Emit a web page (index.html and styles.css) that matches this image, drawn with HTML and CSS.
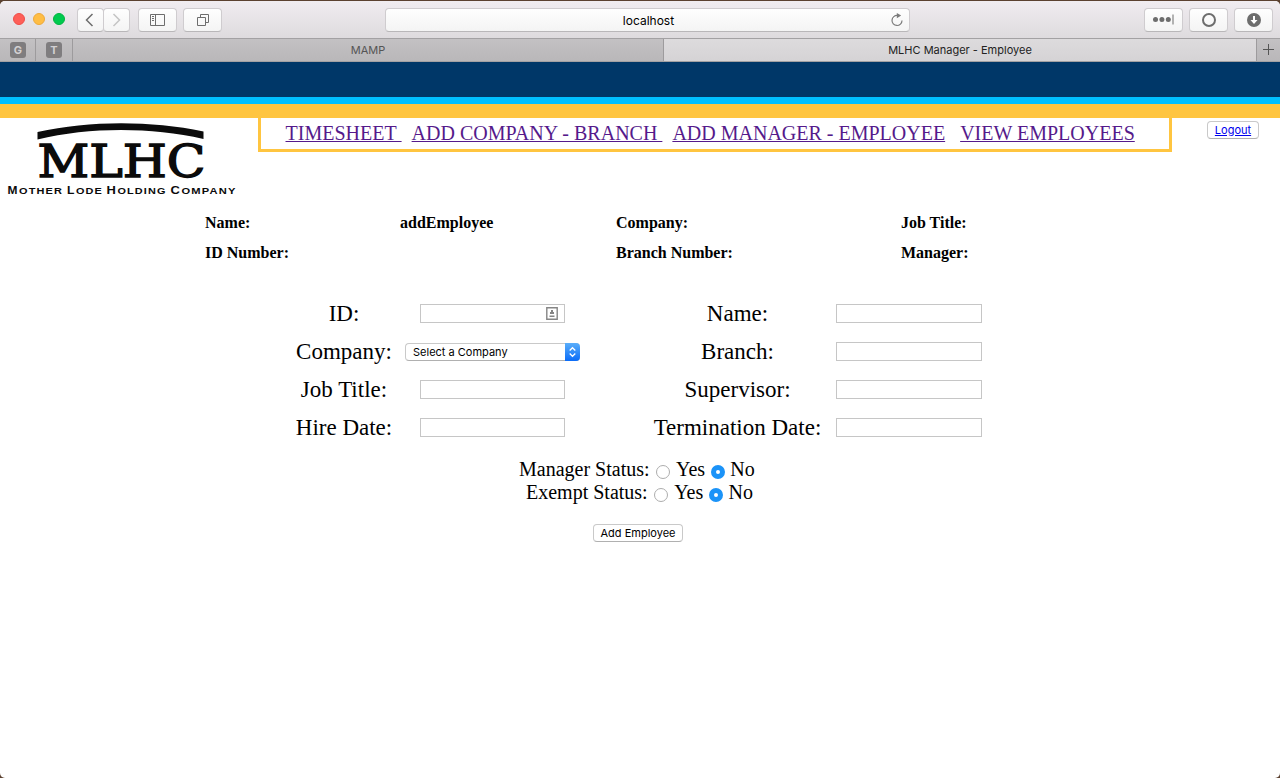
FILE: index.html
```html
<!DOCTYPE html>
<html lang="en">
<head>
<meta charset="utf-8">
<title>MLHC Manager - Employee</title>
<link rel="stylesheet" href="styles.css">
</head>
<body>
<div class="window">
  <header class="toolbar">
    <div class="lights"><i class="light red"></i><i class="light amber"></i><i class="light green"></i></div>
    <div class="history">
      <span class="tool back"><svg width="26" height="22" viewBox="0 0 26 22"><path d="M14.500 5L8.500 11l6 6" fill="none" stroke="#6d6d6d" stroke-width="1.500"/></svg></span>
      <span class="tool forward"><svg width="26" height="22" viewBox="0 0 26 22"><path d="M9.500 5l6 6-6 6" fill="none" stroke="#c4c4c4" stroke-width="1.500"/></svg></span>
    </div>
    <span class="tool sidebar"><svg width="37" height="22" viewBox="0 0 37 22"><path d="M11.500 5.500h14v11h-14zM16.500 5.500v11M13 7.500h2M13 9.500h2M13 11.500h2" fill="none" stroke="#6d6d6d"/></svg></span>
    <span class="tool overview"><svg width="37" height="22" viewBox="0 0 37 22"><path d="M13.500 8.500h8v8h-8zM16.500 8.500v-3h8v8h-3" fill="none" stroke="#6d6d6d"/></svg></span>
    <div class="address"><span class="host">localhost</span>
      <svg class="reload" width="14" height="16" viewBox="0 0 14 16"><path d="M7.500 3.500A5 5 0 1 0 12 8.500" fill="none" stroke="#7a7a7a" stroke-width="1.200"/><path d="M6.800 1l4.400 2.600-4.400 2.600z" fill="#7a7a7a"/></svg>
    </div>
    <span class="tool dots"><svg width="37" height="22" viewBox="0 0 37 22"><g fill="#6d6d6d"><circle cx="10.500" cy="10.500" r="2.500"/><circle cx="16.900" cy="10.500" r="2.500"/><circle cx="23.300" cy="10.500" r="2.500"/><path d="M27.500 5.500h1v10h-1z"/></g></svg></span>
    <span class="tool ring"><svg width="37" height="22" viewBox="0 0 37 22"><circle cx="19" cy="11" r="6" fill="none" stroke="#6d6d6d" stroke-width="2"/></svg></span>
    <span class="tool download"><svg width="37" height="22" viewBox="0 0 37 22"><circle cx="19" cy="11" r="7" fill="#6d6d6d"/><path d="M18 7h2v4h2.500L19 15l-3.500-4H18z" fill="#fff"/></svg></span>
  </header>
  <div class="tabs">
    <span class="pin"><b>G</b></span>
    <span class="pin"><b>T</b></span>
    <span class="tab">MAMP</span>
    <span class="tab active">MLHC Manager - Employee</span>
    <span class="new-tab"><svg width="24" height="23" viewBox="0 0 24 23"><path d="M6 10.500h11M11.500 5v11" fill="none" stroke="#555"/></svg></span>
  </div>
  <main class="page">
    <div class="banner"></div>
    <div class="top">
      <svg class="logo" width="244" height="86" viewBox="0 0 244 86">
        <path d="M37.500 14C90 2.500 150 2.500 203.500 13.500V21C150 9 90 9 37.500 21.500z" fill="#0b0b0b"/>
        <text class="logo-name" x="37.500" y="58.500" textLength="168" lengthAdjust="spacingAndGlyphs">MLHC</text>
        <g class="logo-line">
          <text class="cap" x="7.500" y="76" textLength="11" lengthAdjust="spacingAndGlyphs">M</text>
          <text x="19" y="76" textLength="44" lengthAdjust="spacingAndGlyphs">OTHER</text>
          <text class="cap" x="67" y="76" textLength="8.500" lengthAdjust="spacingAndGlyphs">L</text>
          <text x="76" y="76" textLength="27" lengthAdjust="spacingAndGlyphs">ODE</text>
          <text class="cap" x="106.500" y="76" textLength="10.500" lengthAdjust="spacingAndGlyphs">H</text>
          <text x="117.500" y="76" textLength="49" lengthAdjust="spacingAndGlyphs">OLDING</text>
          <text class="cap" x="170.500" y="76" textLength="10.500" lengthAdjust="spacingAndGlyphs">C</text>
          <text x="181.500" y="76" textLength="55" lengthAdjust="spacingAndGlyphs">OMPANY</text>
        </g>
      </svg>
      <nav class="nav">
        <a href="#">TIMESHEET&nbsp;</a>
        <a href="#">ADD COMPANY - BRANCH&nbsp;</a>
        <a href="#">ADD MANAGER - EMPLOYEE</a>
        <a href="#" class="last">VIEW EMPLOYEES</a>
      </nav>
      <button class="button logout"><a href="#">Logout</a></button>
    </div>
    <div class="details">
      <b>Name:</b><b>addEmployee</b><b>Company:</b><b>Job Title:</b>
      <b>ID Number:</b><b></b><b>Branch Number:</b><b>Manager:</b>
    </div>
    <form class="form">
      <div class="fields left">
        <label>ID:</label><span class="input"><svg width="12" height="13" viewBox="0 0 12 13"><path d="M.8.800h10.400v11.400H.8z" fill="#fff" stroke="#858585" stroke-width="1.400"/><path d="M5 3h2v2h1v2H4V5h1zM3.500 8.500h5V10h-5z" fill="#858585"/></svg></span>
        <label>Company:</label><span class="select"><span>Select a Company</span><svg width="15" height="18" viewBox="0 0 15 18"><path d="M4.700 7.500l2.800-2.800 2.800 2.800M4.700 10.500l2.800 2.800 2.800-2.800" fill="none" stroke="#fff" stroke-width="1.300"/></svg></span>
        <label>Job Title:</label><span class="input"></span>
        <label>Hire Date:</label><span class="input"></span>
      </div>
      <div class="fields right">
        <label>Name:</label><span class="input"></span>
        <label>Branch:</label><span class="input"></span>
        <label>Supervisor:</label><span class="input"></span>
        <label>Termination Date:</label><span class="input"></span>
      </div>
    </form>
    <div class="status manager"><span>Manager Status:</span><i class="radio"></i><span>Yes</span><i class="radio on"></i><span>No</span></div>
    <div class="status exempt"><span>Exempt Status:</span><i class="radio"></i><span>Yes</span><i class="radio on"></i><span>No</span></div>
    <button class="button submit">Add Employee</button>
  </main>
</div>
</body>
</html>
```
FILE: styles.css
```css
* { box-sizing: border-box; }
body {
  margin: 0;
  height: 778px;
  overflow: hidden;
  padding-top: 1px;
  background: #5b4130;
  font-family: "Liberation Serif", serif;
  color: #000;
}
.window {
  height: 777px;
  border-radius: 5px;
  overflow: hidden;
  background: #fff;
}
.toolbar {
  display: flex;
  height: 37px;
  padding: 7px 7px 0 13px;
  background: linear-gradient(#f0ecf0, #dedbde);
}
.lights { display: flex; gap: 8px; padding-top: 5px; width: 64px; }
.light { width: 12px; height: 12px; border-radius: 50%; }
.red { background: #fe5f58; border: 1px solid #ef4d49; }
.amber { background: #ffbd44; border: 1px solid #eda93a; }
.green { background: #00ca4e; border: 1px solid #00b440; }
.history { display: flex; width: 53px; margin-right: 8px; }
.tool, .address {
  height: 24px;
  border: 1px solid #cfcccf;
  border-bottom-color: #b9b7b9;
  border-radius: 4px;
  background: linear-gradient(#fefefe, #f4f4f4);
}
.tool { width: 39px; }
.tool svg { display: block; }
.back, .forward { width: 27px; }
.forward { margin-left: -1px; }
.overview { margin-left: 6px; }
.address {
  position: relative;
  width: 525px;
  margin: 0 234px 0 163px;
  padding-left: 2px;
  text-align: center;
  font: 12px/23px Inter, sans-serif;
}
.reload { position: absolute; right: 5px; top: 3px; }
.ring, .download { margin-left: 6px; }
.tabs {
  display: flex;
  height: 24px;
  border-top: 1px solid #a3a1a3;
  border-bottom: 1px solid #a3a1a3;
  background: linear-gradient(#c3c1c3, #b9b7b9);
  font: 11px/22px Inter, sans-serif;
}
.pin {
  display: flex;
  width: 36px;
  padding: 3px 0 0 10px;
  border-right: 1px solid #9d9b9d;
}
.pin + .pin { width: 37px; }
.pin b {
  width: 16px;
  height: 16px;
  border-radius: 3px;
  background: #7f7d7f;
  color: #d2d0d2;
  font-size: 11px;
  line-height: 16px;
  text-align: center;
}
.tab { width: 591px; border-right: 1px solid #9d9b9d; color: #555; text-align: center; }
.tab.active { width: 593px; background: linear-gradient(#dddbdd, #d5d3d5); color: #222; }
.new-tab { width: 23px; }
.new-tab svg { display: block; }
.banner {
  height: 56px;
  border-bottom: 14px solid #ffc540;
  background: linear-gradient(#003768 35px, #00bfff 35px);
}
.top { display: flex; align-items: flex-start; height: 97px; }
.logo { margin-right: 14px; }
.logo-name { font: 45px "DejaVu Serif", serif; fill: #0b0b0b; stroke: #0b0b0b; stroke-width: 1.400; }
.logo-line { font: bold 9.700px "Liberation Sans", sans-serif; letter-spacing: 1px; fill: #0b0b0b; }
.cap { font-size: 11.300px; }
.nav {
  display: flex;
  gap: 10px;
  width: 914px;
  height: 34px;
  padding: 3px 0 0 24.500px;
  border: 3px solid #ffc540;
  border-top: 0;
  font-size: 20px;
  line-height: 24px;
  white-space: nowrap;
}
.nav a { color: #551a8b; text-decoration-thickness: 1px; }
.nav .last { margin-left: 5px; }
.button {
  height: 18px;
  padding: 0;
  border: 1px solid #c9c9c9;
  border-bottom-color: #b0b0b0;
  border-radius: 4px;
  background: #fff;
  color: #000;
  font: 11px/15px Inter, sans-serif;
}
.logout { width: 52px; margin: 3px 0 0 35px; }
.logout a { color: #0000ee; }
.details {
  display: grid;
  grid-template-columns: 195px 216px 285px auto;
  grid-auto-rows: 30px;
  padding-left: 205px;
  margin-top: -7px;
  font-size: 16px;
  line-height: 30px;
}
.form { display: flex; gap: 66px; padding: 27px 0 0 284px; }
.fields {
  display: grid;
  grid-template-columns: 120px 177px;
  grid-auto-rows: 38px;
  place-items: center;
  font-size: 23px;
  line-height: 38px;
}
.right { grid-template-columns: 181px 162px; }
.fields label { white-space: nowrap; }
.input {
  display: flex;
  justify-content: flex-end;
  width: 145px;
  height: 19px;
  margin-bottom: 2px;
  padding: 2px 6px 0 0;
  border: 1px solid #c6c6c6;
}
.right .input { width: 146px; }
.select {
  display: flex;
  justify-content: space-between;
  width: 175px;
  height: 18px;
  padding-left: 7px;
  border: 1px solid #c9c9c9;
  border-bottom-color: #b0b0b0;
  border-right: 0;
  border-radius: 4px;
  font: 11px/16px Inter, sans-serif;
}
.select svg { margin-top: -1px; border-radius: 0 4px 4px 0; background: linear-gradient(#5aaefa, #0a6cf8); }
.status { display: flex; height: 23px; font-size: 20px; line-height: 23px; }
.manager { margin: 11px 0 0 519px; }
.exempt { margin-left: 526px; }
.radio {
  width: 14px;
  height: 14px;
  margin: 7px 6px 0 6.500px;
  border: 1px solid #adadad;
  border-radius: 50%;
  background: #fff;
}
.radio.on { margin-left: 5.700px; margin-right: 5.500px; border: 5px solid #1b93f8; }
.submit { display: block; width: 90px; margin: 20px 0 0 593px; }
```
